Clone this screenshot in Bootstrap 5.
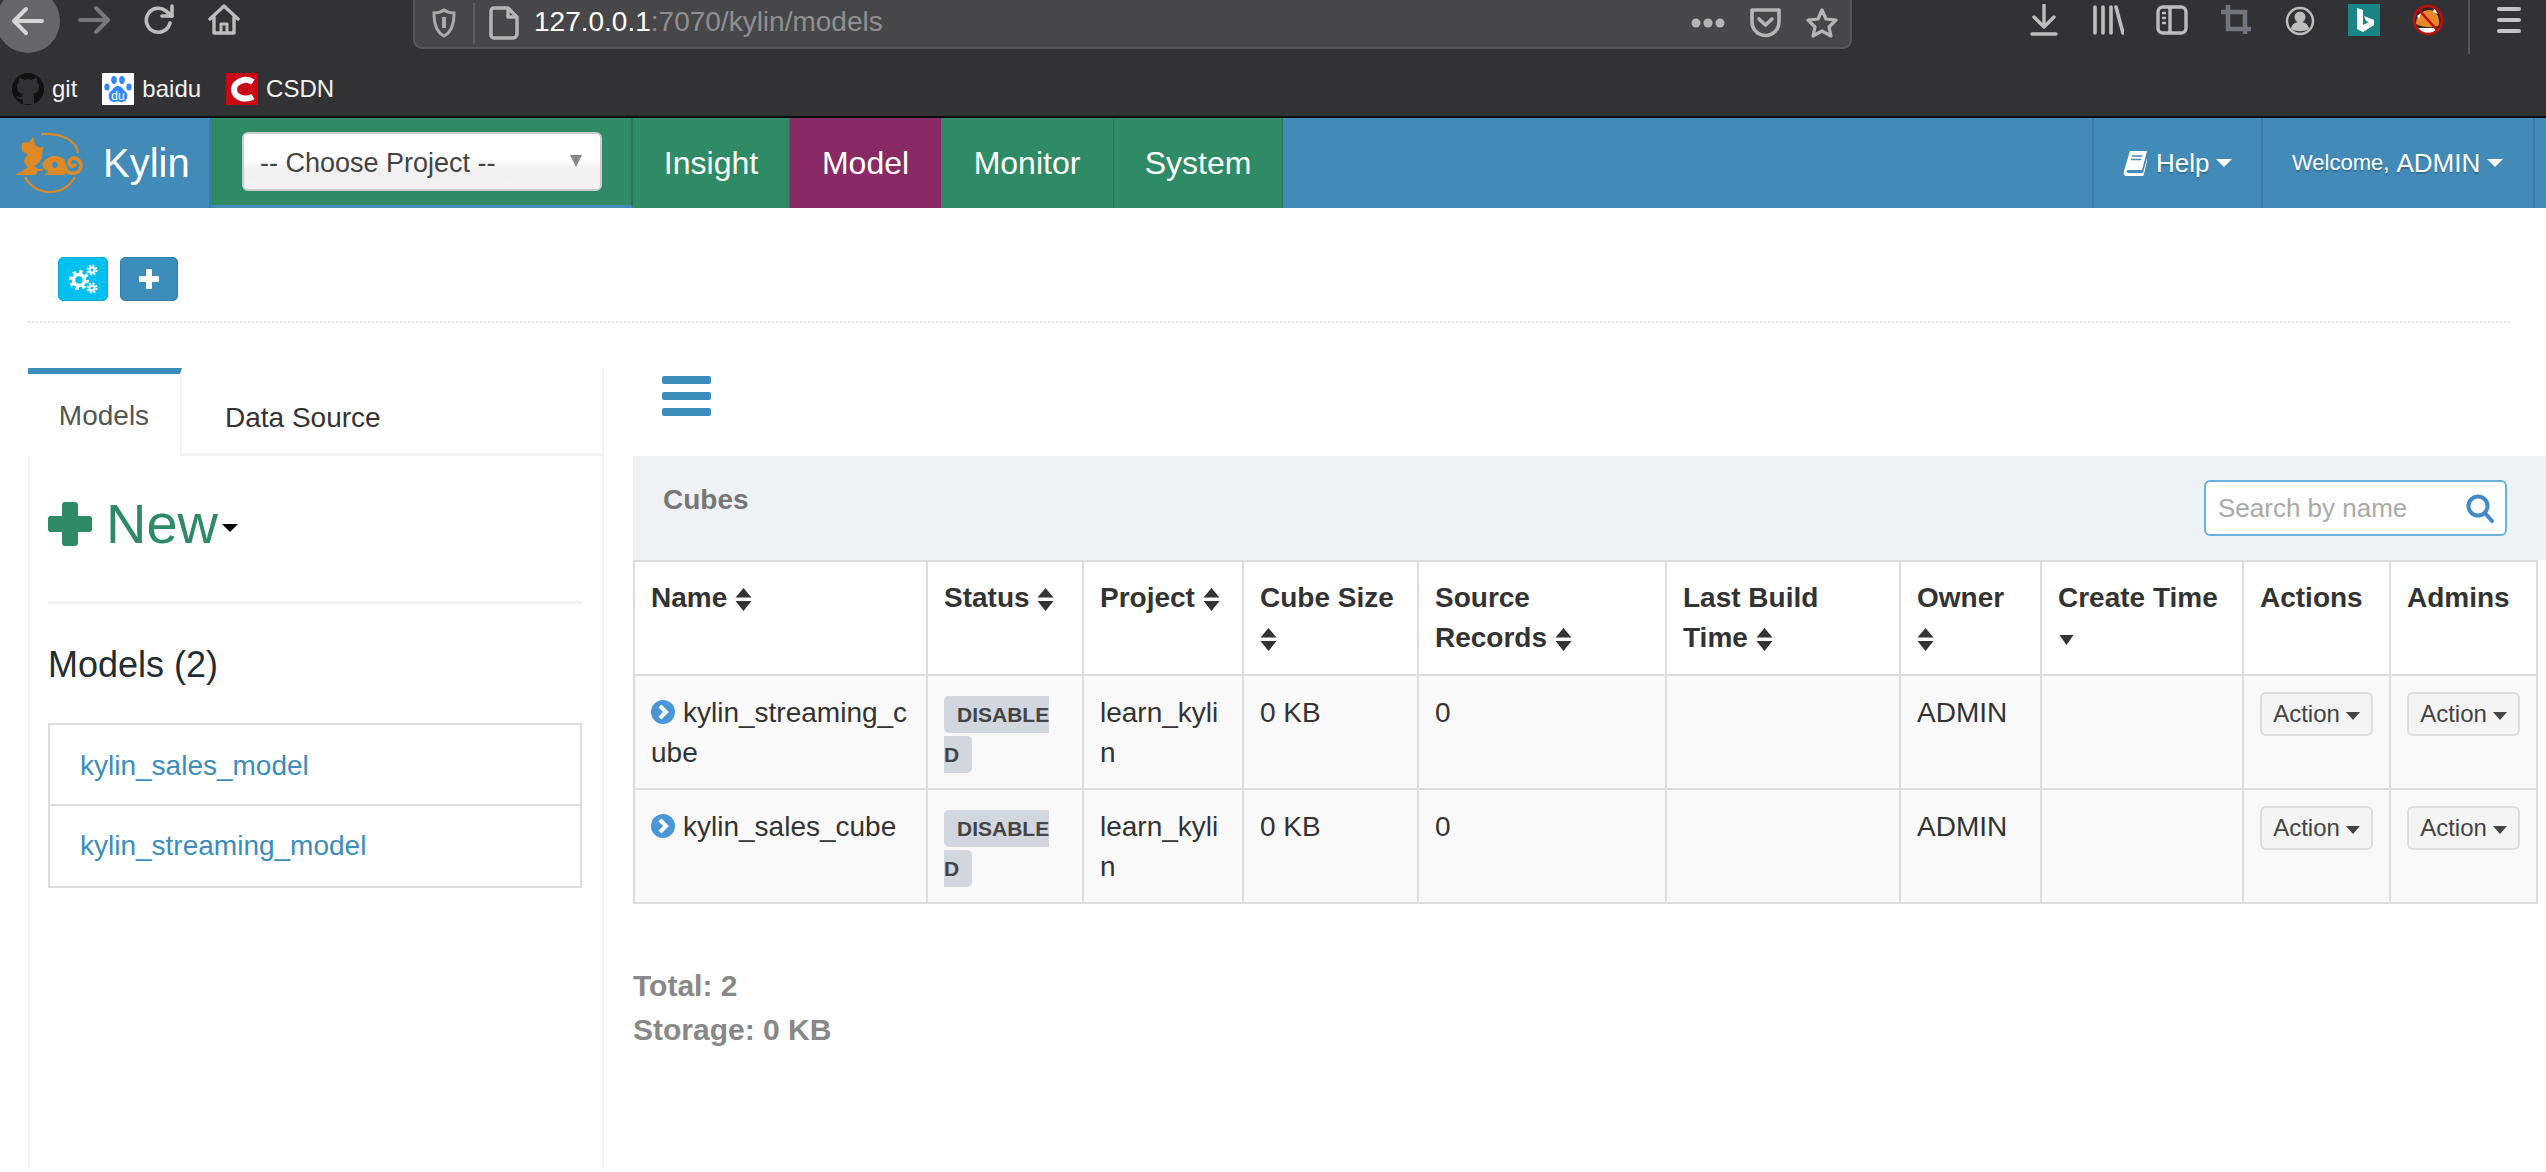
<!DOCTYPE html>
<html lang="en">
<head>
  <meta charset="UTF-8">
  <title>Kylin - Models</title>
  <link href="https://cdn.jsdelivr.net/npm/bootstrap@5.3.0/dist/css/bootstrap.min.css" rel="stylesheet">
  <style>
    html, body { height: 100%; }
    body { font-family: "Liberation Sans", Arial, sans-serif; font-size: 28px; line-height: 40px; color: #333; background: #fff; overflow: hidden; }

    /* browser chrome */
    .ff-chrome { background: #323234; height: 118px; border-bottom: 2px solid #0c0c0d; }
    .ff-toolbar { height: 54px; }
    .ff-back { width: 64px; height: 64px; margin: -11px 0 0 -4px; background: #666668; flex: none; }
    .ff-icon { width: 32px; height: 32px; flex: none; }
    .ff-ml-fwd { margin-left: 18px; }
    .ff-ml-nav { margin-left: 33px; }
    .ff-urlbar { width: 1439px; height: 50px; margin-left: 173px; margin-top: -1px; background: #474749; border: 2px solid #58585a; border-top: 0; border-radius: 0 0 9px 9px; padding-left: 17px; padding-right: 12px; }
    .ff-sep { width: 2px; height: 41px; background: #5e5e60; margin: 0 14px 0 17px; }
    .ff-url { font-size: 28px; line-height: 32px; margin-left: 15px; margin-top: -2px; color: #8f8f91; }
    .ff-url b { font-weight: 400; color: #fff; }
    .ff-tools { gap: 32px; margin-left: auto; }
    .ff-vsep { width: 2px; height: 54px; background: #565658; margin-left: 24px; }
    .ff-burger { margin-left: 27px; margin-right: 23px; }
    .ff-marks { height: 62px; padding-left: 12px; padding-top: 8px; font-size: 24px; line-height: 32px; color: #f2f2f2; }
    .ff-mark { gap: 8px; margin-right: 25px; }

    /* app navbar */
    .ky-nav { height: 90px; background: #428bb9; color: #fff; }
    .ky-brand { width: 211px; height: 90px; gap: 0; border-right: 2px solid #377ca7; flex: none; }
    .ky-brand svg { margin-left: 14px; }
    .ky-brand span { font-size: 40px; line-height: 48px; margin-left: 19px; }
    .ky-pick { width: 422px; height: 90px; flex: none; background: #2e8b65; border-right: 2px solid #277757; border-bottom: 3px solid #428bb9; padding-left: 31px; }
    .ky-select { width: 360px; height: 59px; background: linear-gradient(#fff 45%, #f0f0f0 65%, #f3f3f3); border: 2px solid #ccc; border-radius: 6px; color: #444; font-size: 27px; line-height: 36px; padding-left: 16px; padding-right: 18px; padding-top: 2px; }
    .ky-arrow { width: 0; height: 0; border-left: 6px solid transparent; border-right: 6px solid transparent; border-top: 12px solid #888; margin-top: -4px; }
    .ky-tab { height: 90px; font-size: 32px; color: #fff; display: flex; align-items: center; justify-content: center; text-decoration: none; background: #2e8b65; border-right: 1px solid #277757; flex: none; }
    .ky-t1 { width: 157px; } .ky-t2 { width: 151px; background: #8a2a64; border-right: 0; } .ky-t3 { width: 173px; } .ky-t4 { width: 169px; }
    .ky-right { margin-left: auto; height: 90px; }
    .ky-drop { height: 90px; border-left: 2px solid #377ca7; color: #fff; text-shadow: 0 2px 1px rgba(0,0,0,.2); }
    .ky-help { width: 169px; font-size: 26px; padding-left: 29px; }
    .ky-user { width: 272px; font-size: 26px; padding-left: 29px; }
    .ky-user small { font-size: 22px; margin-right: 7px; }
    .ky-end { width: 13px; height: 90px; border-left: 2px solid #377ca7; }
    .ky-caret { display: inline-block; width: 0; height: 0; border-left: 8px solid transparent; border-right: 8px solid transparent; border-top: 8px solid #fff; margin-left: 7px; vertical-align: middle; }

    /* page */
    .ky-top { height: 115px; margin: 0 36px 0 28px; padding: 49px 0 0 30px; gap: 12px; border-bottom: 2px dotted #e4e4e4; }
    .ky-ibtn { height: 44px; border-radius: 5px; padding: 0; display: flex; align-items: center; justify-content: center; border: 1px solid transparent; }
    .ky-ibtn-g { width: 50px; background: #00c0ef; border-color: #00acd6; }
    .ky-ibtn-p { width: 58px; background: #3c8dbc; border-color: #367fa9; }
    .ky-body { margin-top: 45px; height: 800px; }

    .ky-side { width: 576px; margin-left: 28px; border-left: 2px solid #f4f4f4; border-right: 2px solid #f4f4f4; flex: none; }
    .ky-tabs { height: 88px; border-bottom: 3px solid #f4f4f4; margin-right: 0; }
    .ky-stab { width: 154px; height: 88px; margin: 0 0 -3px -2px; background: #fff; border-top: 6px solid #3c8dbc; border-right: 2px solid #f4f4f4; color: #555; text-align: center; padding-top: 22px; font-size: 28px; text-decoration: none; }
    .ky-stab2 { margin-left: 43px; padding-top: 30px; font-size: 28px; color: #333; text-decoration: none; }
    .ky-new { margin: 38px 0 0 18px; color: #2e8b65; font-size: 56px; line-height: 60px; height: 60px; text-decoration: none; }
    .ky-new svg { margin-right: 14px; }
    .ky-new-c { width: 0; height: 0; border-left: 8px solid transparent; border-right: 8px solid transparent; border-top: 8px solid #000; margin: 8px 0 0 4px; }
    .ky-side hr { margin: 47px 20px 0 18px; border-top: 3px solid #f1f1f1; opacity: 1; }
    .ky-mh { font-size: 36px; line-height: 44px; margin: 39px 0 0 18px; color: #222d32; font-weight: 400; }
    .ky-mlist { margin: 36px 20px 0 18px; border-radius: 0; }
    .ky-mlist .list-group-item { height: 83px; padding: 21px 30px; border: 2px solid #ddd; font-size: 28px; line-height: 40px; color: #3c8dbc; border-radius: 0; }
    .ky-mlist .list-group-item + .list-group-item { border-top: 0; height: 82px; padding-top: 20px; }

    .ky-main { margin-left: 29px; flex: 1; min-width: 0; padding-right: 8px; }
    .ky-bars { width: 49px; height: 40px; margin: 8px 0 0 29px; flex: none; display: flex; flex-direction: column; justify-content: space-between; }
    .ky-bars i { display: block; height: 8px; background: #3c8dbc; border-radius: 2px; }
    .ky-head { height: 104px; margin-top: 40px; margin-right: -8px; background: #eef2f6; padding: 24px 39px 0 30px; }
    .ky-head h3 { font-size: 28px; line-height: 40px; font-weight: 700; color: #777; margin: 0; }
    .ky-search { width: 303px; height: 56px; background: #fff; border: 2px solid #6cb0e0; border-radius: 6px; padding: 0 10px 0 12px; margin-top: 0; }
    .ky-search input { border: 0; padding: 0; outline: 0; font-size: 26px; width: 240px; color: #555; background: transparent; }
    .ky-search input::placeholder { color: #aaa; opacity: 1; }

    .ky-tbl { table-layout: fixed; width: 1903px; margin: 0; border-collapse: collapse; color: #333; }
    .ky-tbl th, .ky-tbl td { border: 2px solid #ddd; padding: 16px; font-size: 28px; line-height: 40px; word-break: break-all; vertical-align: top; }
    .ky-tbl th { background: #fff; word-break: normal; font-weight: 700; height: 114px; box-shadow: none; }
    .ky-tbl td { background: #f9f9f9; height: 114px; box-shadow: none; font-weight: 400; padding-top: 17px; padding-bottom: 15px; }
    .ky-tbl td, .ky-tbl th { color: #333; }
    .ky-exp { vertical-align: -2px; margin-right: 8px; }
    .ky-status { background: #d2d6de; color: #444; font-size: 21px; font-weight: 700; padding: 7px 13px; border-radius: 5px; line-height: 1; }
    .ky-act { display: block; width: 113px; height: 44px; margin-top: -1px; font-size: 24px; line-height: 28px; white-space: nowrap; background: #f4f4f4; border: 2px solid #ddd; border-radius: 6px; color: #444; padding: 0; }
    .ky-act-c { display: inline-block; width: 0; height: 0; border-left: 7px solid transparent; border-right: 7px solid transparent; border-top: 8px solid #444; margin-left: 6px; vertical-align: middle; }
    .ky-totals { margin-top: 60px; font-size: 30px; line-height: 44px; font-weight: 700; color: #888; }
  </style>
</head>
<body>
  <!-- browser toolbar -->
  <div class="ff-chrome">
    <div class="ff-toolbar d-flex align-items-start">
      <div class="ff-back rounded-circle d-flex align-items-center justify-content-center">
        <svg width="34" height="34" viewBox="0 0 34 34" fill="none" stroke="#d6d6d6" stroke-width="4" stroke-linecap="round" stroke-linejoin="round"><path d="M31 17H4M15 5L3 17l12 12"/></svg>
      </div>
      <svg class="ff-icon ff-ml-fwd mt-1" viewBox="0 0 32 32" fill="none" stroke="#77777a" stroke-width="4" stroke-linecap="round" stroke-linejoin="round"><path d="M2 16h27M18 4l12 12-12 12"/></svg>
      <svg class="ff-icon ff-ml-nav mt-1" viewBox="0 0 32 32" fill="none" stroke="#bdbdbd" stroke-width="3.6" stroke-linecap="round" stroke-linejoin="round"><path d="M27 19a12 12 0 1 1-4-12l6 5"/><path d="M29 2v10H19" /></svg>
      <svg class="ff-icon ff-ml-nav mt-1" viewBox="0 0 32 32" fill="none" stroke="#bdbdbd" stroke-width="3.4" stroke-linecap="round" stroke-linejoin="round"><path d="M2 15L16 2l14 13M6 12v17h20V12"/><path d="M13 29v-9h6v9" stroke-width="3"/></svg>
      <div class="ff-urlbar d-flex align-items-center">
        <svg width="24" height="30" viewBox="0 0 24 30" fill="none" stroke="#aaa" stroke-width="3"><path d="M12 2c3 2 6 3 10 3 0 10-2 19-10 23C4 24 2 15 2 5c4 0 7-1 10-3z"/><path d="M12 9v11" stroke-width="4"/></svg>
        <div class="ff-sep"></div>
        <svg width="30" height="34" viewBox="0 0 30 34" fill="none" stroke="#b5b5b5" stroke-width="3.5" stroke-linejoin="round"><path d="M5 2h14l9 9v17a4 4 0 0 1-4 4H5a3 3 0 0 1-3-3V5a3 3 0 0 1 3-3zM19 2v9h9"/></svg>
        <span class="ff-url"><b>127.0.0.1</b>:7070/kylin/models</span>
        <div class="ms-auto d-flex align-items-center">
          <svg width="34" height="10" viewBox="0 0 34 10" fill="#b5b5b5"><circle cx="5" cy="5" r="4.5"/><circle cx="17" cy="5" r="4.5"/><circle cx="29" cy="5" r="4.5"/></svg>
          <svg class="ms-4" width="33" height="32" viewBox="0 0 33 32" fill="none" stroke="#b5b5b5" stroke-width="3.6" stroke-linecap="round" stroke-linejoin="round"><path d="M3 3h27v12a13.500 13.500 0 0 1-27 0z"/><path d="M10 12l6.500 6L23 12"/></svg>
          <svg class="ms-4" width="32" height="32" viewBox="0 0 32 32" fill="none" stroke="#b5b5b5" stroke-width="3.2" stroke-linejoin="round"><path d="M16 3l4 9 10 1-7 7 2 9-9-5-9 5 2-9-7-7 10-1z"/></svg>
        </div>
      </div>
      <div class="ff-tools d-flex">
        <svg class="ff-icon mt-1" viewBox="0 0 32 32" fill="none" stroke="#bdbdbd" stroke-width="3.4" stroke-linecap="round" stroke-linejoin="round"><path d="M16 1v22M6 13l10 10 10-10M4 30h24"/></svg>
        <svg class="ff-icon mt-1" viewBox="0 0 32 32" fill="none" stroke="#bdbdbd" stroke-width="3.6" stroke-linecap="round"><path d="M3 3v26M11 3v26M19 3v26M24 3l7 26"/></svg>
        <svg class="ff-icon mt-1" viewBox="0 0 32 32" fill="none" stroke="#bdbdbd" stroke-width="3.4"><rect x="2" y="3" width="28" height="26" rx="5"/><path d="M14 3v26"/><path d="M6 9h4M6 14h4M6 19h4" stroke-width="2.5"/></svg>
        <svg class="ff-icon mt-1" viewBox="0 0 32 32" fill="none" stroke="#70757f" stroke-width="4.500"><path d="M1 8h24v22M8 1v24h23"/></svg>
        <svg class="ff-icon mt-1" viewBox="0 0 32 32" fill="#bdbdbd"><circle cx="16" cy="17" r="13" fill="none" stroke="#bdbdbd" stroke-width="2.5"/><circle cx="16" cy="13" r="5.500"/><path d="M7 25c1-6 5-7 9-7s8 1 9 7c-5 3-13 3-18 0z"/></svg>
        <svg class="ff-icon mt-1" viewBox="0 0 32 32"><rect width="32" height="32" fill="#1b8585"/><path d="M9 4l6 2v15l6-3-3-1-2-5 10 4v5l-11 7-6-3z" fill="#fff"/></svg>
        <svg class="ff-icon mt-1" viewBox="0 0 32 32"><circle cx="16" cy="16" r="14" fill="#2a2a2c"/><path d="M4 20c0-8 6-14 14-14 2 0 6 2 8 6 1 3 2 8 0 10-6 2-14 2-22-2z" fill="#e8862a"/><path d="M6 24h20l-5 5H11zM22 4l4 6-5-2zM5 12l4-3-2 6z" fill="#fff"/><circle cx="16" cy="16" r="14" fill="none" stroke="#c10d0d" stroke-width="2.500"/><path d="M7 6l18 20" stroke="#c10d0d" stroke-width="2.500"/></svg>
      </div>
      <div class="ff-vsep"></div>
      <svg class="ff-burger mt-1" width="26" height="30" viewBox="0 0 26 30" fill="#c4c4c4"><rect y="3" width="24" height="4" rx="2"/><rect y="14" width="24" height="4" rx="2"/><rect y="25" width="24" height="4" rx="2"/></svg>
    </div>
    <div class="ff-marks d-flex align-items-center">
      <div class="ff-mark d-flex align-items-center">
        <svg width="32" height="32" viewBox="0 0 32 32"><circle cx="16" cy="16" r="16" fill="#111"/><path d="M11 31v-5c-4 1-6-1-7-3 2 0 3 2 6 1 0-2 1-3 1-3-5-1-6-4-6-8 0-2 1-3 2-4-1-2 0-4 0-4 2 0 4 1 5 2 3-1 6-1 8 0 1-1 3-2 5-2 0 0 1 2 0 4 1 1 2 2 2 4 0 4-1 7-6 8 1 1 1 2 1 4v6z" fill="#323234"/></svg>
        <span>git</span>
      </div>
      <div class="ff-mark d-flex align-items-center">
        <svg width="32" height="32" viewBox="0 0 32 32"><rect width="32" height="32" fill="#fff"/><g fill="#3388ff"><ellipse cx="5" cy="14" rx="2.700" ry="3.500"/><ellipse cx="12" cy="7" rx="2.800" ry="4"/><ellipse cx="20" cy="7" rx="2.800" ry="4"/><ellipse cx="27" cy="14" rx="2.700" ry="3.500"/><path d="M16 13c4 0 5 4 8 6 3 3 1 11-5 10-2 0-4-1-6 0-6 1-8-7-5-10 3-2 4-6 8-6z"/></g><text x="16" y="27" text-anchor="middle" font-size="12" fill="#fff" font-family="Liberation Sans, sans-serif">du</text></svg>
        <span>baidu</span>
      </div>
      <div class="ff-mark d-flex align-items-center">
        <svg width="32" height="32" viewBox="0 0 32 32"><rect width="32" height="32" fill="#c90a16"/><path d="M27 9c-3-2-6-2.500-9-2-6 1-10 5-10 9.500S12 25 18 25.500c3 .2 6 0 9-2" fill="none" stroke="#fff" stroke-width="6"/></svg>
        <span>CSDN</span>
      </div>
    </div>
  </div>

  <!-- kylin navbar -->
  <nav class="ky-nav d-flex">
    <div class="ky-brand d-flex align-items-center">
      <svg width="70" height="60" viewBox="0 0 70 60" fill="none">
        <path d="M27 1C46 0 62 6 64 20M11 44C16 54 26 59 36 59C46 59 55 54 61 44" stroke="#dd8a26" stroke-width="2.200"/>
        <path d="M8 10L15 9L19 4L21 12L26 15L29 13L28 24C26 30 22 32 20 33L24 36L22 42L1 42L8 38L14 34C10 32 8 26 14 22L8 18Z" fill="#dd8a26"/>
        <path d="M16 36H29V38H16Z" fill="#dd8a26"/>
        <path d="M28 31C34 22 42 21 50 26L54 37L50 42H30L35 38L30 36Z" fill="#dd8a26"/>
        <path d="M50 36C56 43 66 41 67 33C67 26 60 23 56 27C53 31 58 35 61 32" stroke="#dd8a26" stroke-width="3.500" stroke-linecap="round"/>
        <circle cx="41" cy="32" r="3" fill="#428bb9"/>
      </svg>
      <span>Kylin</span>
    </div>
    <div class="ky-pick d-flex align-items-center">
      <div class="ky-select d-flex align-items-center justify-content-between">
        <span>-- Choose Project --</span><span class="ky-arrow"></span>
      </div>
    </div>
    <a class="ky-tab ky-t1" href="#">Insight</a>
    <a class="ky-tab ky-t2" href="#">Model</a>
    <a class="ky-tab ky-t3" href="#">Monitor</a>
    <a class="ky-tab ky-t4" href="#">System</a>
    <div class="ky-right d-flex">
      <div class="ky-drop ky-help d-flex align-items-center">
        <svg class="me-2" width="25" height="26" viewBox="0 0 25 26" fill="#fff"><path d="M7 1h17l-5 19H5c-2 0-2 3 0 3h15l4-15v3l-3 13c0 1-1 2-2 2H4c-3 0-4-2-3-5z"/><path d="M9 6h10M8 9.500h10" stroke="#428bb9" stroke-width="1.500"/></svg>
        <span>Help</span><span class="ky-caret"></span>
      </div>
      <div class="ky-drop ky-user d-flex align-items-center">
        <small>Welcome,</small><span>ADMIN</span><span class="ky-caret"></span>
      </div>
      <div class="ky-end"></div>
    </div>
  </nav>

  <!-- action buttons -->
  <div class="ky-top d-flex align-items-start">
    <button class="ky-ibtn ky-ibtn-g" type="button" aria-label="Settings">
      <svg width="30" height="30" viewBox="0 0 30 30" fill="none" stroke="#fff">
        <circle cx="11" cy="16" r="5.500" stroke-width="3.500"/><circle cx="11" cy="16" r="8.500" stroke-width="3" stroke-dasharray="3.340 3.340"/>
        <circle cx="24" cy="6" r="2.500" stroke-width="2"/><circle cx="24" cy="6" r="4.500" stroke-width="2" stroke-dasharray="2 1.530"/>
        <circle cx="24" cy="24" r="2.500" stroke-width="2"/><circle cx="24" cy="24" r="4.500" stroke-width="2" stroke-dasharray="2 1.530"/>
      </svg>
    </button>
    <button class="ky-ibtn ky-ibtn-p" type="button" aria-label="Add">
      <svg width="20" height="20" viewBox="0 0 20 20" fill="#fff"><rect x="7" y="0" width="6" height="20" rx="1"/><rect x="0" y="7" width="20" height="6" rx="1"/></svg>
    </button>
  </div>

  <div class="ky-body d-flex">
    <!-- model tree -->
    <div class="ky-side">
      <div class="ky-tabs d-flex">
        <a class="ky-stab" href="#">Models</a>
        <a class="ky-stab2" href="#">Data Source</a>
      </div>
      <a class="ky-new d-flex align-items-center" href="#">
        <svg width="44" height="44" viewBox="0 0 44 44" fill="#2e8b65"><rect x="14" y="0" width="16" height="44" rx="3"/><rect x="0" y="14" width="44" height="16" rx="3"/></svg>
        <span>New</span><span class="ky-new-c"></span>
      </a>
      <hr>
      <h4 class="ky-mh">Models (2)</h4>
      <ul class="list-group ky-mlist">
        <li class="list-group-item">kylin_sales_model</li>
        <li class="list-group-item">kylin_streaming_model</li>
      </ul>
    </div>

    <!-- cube list -->
    <div class="ky-main">
      <div class="ky-bars"><i></i><i></i><i></i></div>
      <div class="ky-head d-flex justify-content-between">
        <h3>Cubes</h3>
        <div class="ky-search d-flex align-items-center justify-content-between">
          <input type="text" placeholder="Search by name">
          <svg width="30" height="30" viewBox="0 0 30 30" fill="none" stroke="#428bca" stroke-width="4" stroke-linecap="round"><circle cx="13" cy="13" r="9.500"/><path d="M20 20l7 8"/></svg>
        </div>
      </div>
      <table class="table ky-tbl">
        <colgroup>
          <col width="293"><col width="156"><col width="160"><col width="175"><col width="248"><col width="234"><col width="141"><col width="202"><col width="147"><col width="147">
        </colgroup>
        <thead>
          <tr>
            <th>Name <svg width="17" height="23" viewBox="0 0 17 23" fill="#333"><path d="M8.500 0l8 9.500H.5zM8.500 23l8-10H.5z"/></svg></th>
            <th>Status <svg width="17" height="23" viewBox="0 0 17 23" fill="#333"><path d="M8.500 0l8 9.500H.5zM8.500 23l8-10H.5z"/></svg></th>
            <th>Project <svg width="17" height="23" viewBox="0 0 17 23" fill="#333"><path d="M8.500 0l8 9.500H.5zM8.500 23l8-10H.5z"/></svg></th>
            <th>Cube Size <svg width="17" height="23" viewBox="0 0 17 23" fill="#333"><path d="M8.500 0l8 9.500H.5zM8.500 23l8-10H.5z"/></svg></th>
            <th>Source Records <svg width="17" height="23" viewBox="0 0 17 23" fill="#333"><path d="M8.500 0l8 9.500H.5zM8.500 23l8-10H.5z"/></svg></th>
            <th>Last Build Time <svg width="17" height="23" viewBox="0 0 17 23" fill="#333"><path d="M8.500 0l8 9.500H.5zM8.500 23l8-10H.5z"/></svg></th>
            <th>Owner <svg width="17" height="23" viewBox="0 0 17 23" fill="#333"><path d="M8.500 0l8 9.500H.5zM8.500 23l8-10H.5z"/></svg></th>
            <th>Create Time <svg width="17" height="12" viewBox="0 0 17 12" fill="#333"><path d="M8.500 11l7-10H1.500z"/></svg></th>
            <th>Actions</th>
            <th>Admins</th>
          </tr>
        </thead>
        <tbody>
          <tr>
            <td><svg class="ky-exp" width="24" height="24" viewBox="0 0 24 24"><circle cx="12" cy="12" r="12" fill="#4a96d6"/><path d="M9 6l6 6-6 6" fill="none" stroke="#fff" stroke-width="4"/></svg>kylin_streaming_cube</td>
            <td><span class="ky-status">DISABLED</span></td>
            <td>learn_kylin</td>
            <td>0 KB</td>
            <td>0</td>
            <td></td>
            <td>ADMIN</td>
            <td></td>
            <td><button class="ky-act" type="button">Action<span class="ky-act-c"></span></button></td>
            <td><button class="ky-act" type="button">Action<span class="ky-act-c"></span></button></td>
          </tr>
          <tr>
            <td><svg class="ky-exp" width="24" height="24" viewBox="0 0 24 24"><circle cx="12" cy="12" r="12" fill="#4a96d6"/><path d="M9 6l6 6-6 6" fill="none" stroke="#fff" stroke-width="4"/></svg>kylin_sales_cube</td>
            <td><span class="ky-status">DISABLED</span></td>
            <td>learn_kylin</td>
            <td>0 KB</td>
            <td>0</td>
            <td></td>
            <td>ADMIN</td>
            <td></td>
            <td><button class="ky-act" type="button">Action<span class="ky-act-c"></span></button></td>
            <td><button class="ky-act" type="button">Action<span class="ky-act-c"></span></button></td>
          </tr>
        </tbody>
      </table>
      <div class="ky-totals">
        <div>Total: 2</div>
        <div>Storage: 0 KB</div>
      </div>
    </div>
  </div>

  <script src="https://cdn.jsdelivr.net/npm/bootstrap@5.3.0/dist/js/bootstrap.bundle.min.js"></script>
</body>
</html>
